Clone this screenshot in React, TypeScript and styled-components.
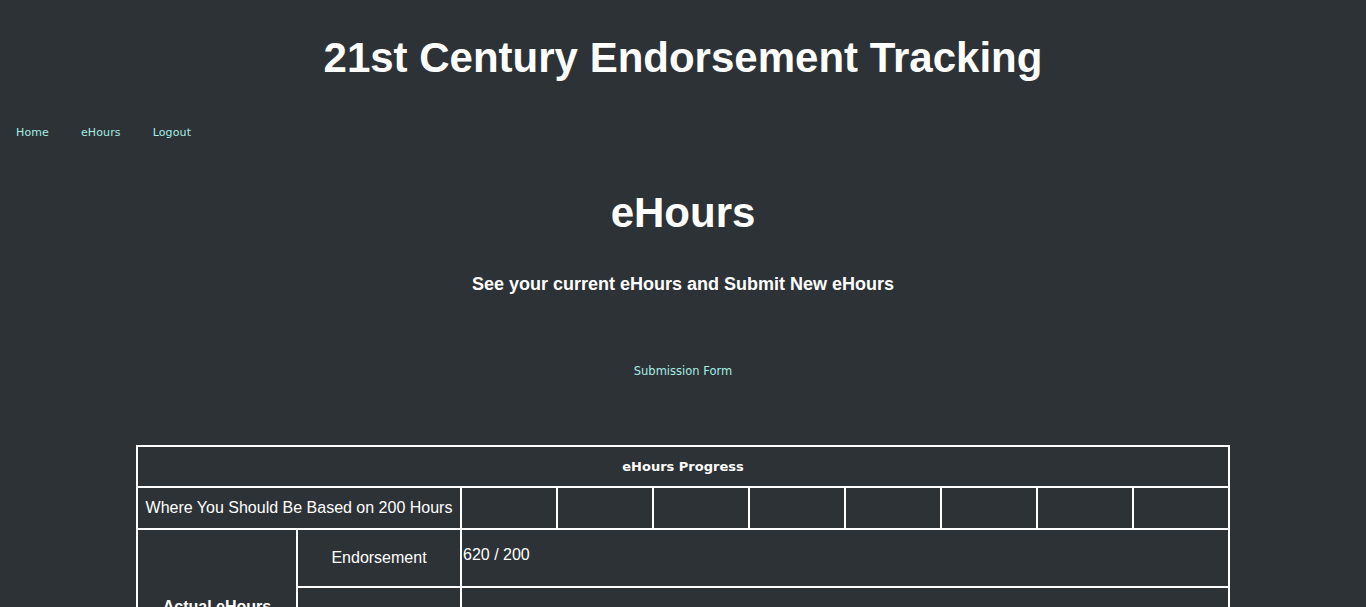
import React from "react";
import styled, { createGlobalStyle } from "styled-components";

const Global = createGlobalStyle`
  html, body { margin: 0; padding: 0; background: #2d3236; }
  body { font-family: "Liberation Sans", Arial, sans-serif; color: #ffffff; }
`;

const Page = styled.div`
  display: flex;
  flex-direction: column;
  padding-top: 35px;
  min-height: 607px;
  background: #2d3236;
`;

const Title = styled.h1`
  margin: 0;
  text-align: center;
  font-size: 42px;
  line-height: 46px;
  font-weight: 700;
`;

const Nav = styled.nav`
  display: flex;
  margin-top: 45px;
`;

const NavLink = styled.a`
  font-family: "DejaVu Sans", sans-serif;
  font-size: 11px;
  line-height: 13px;
  letter-spacing: 0.12px;
  color: #a6ede4;
  text-decoration: none;
  padding: 0 16px;
`;

const Heading = styled.h2`
  margin: 50px 0 0;
  text-align: center;
  font-size: 42px;
  line-height: 48px;
  font-weight: 700;
`;

const Sub = styled.h3`
  margin: 36px 0 0;
  text-align: center;
  font-size: 18px;
  line-height: 22px;
  font-weight: 700;
`;

const FormLinkRow = styled.div`
  display: flex;
  justify-content: center;
  margin-top: 70px;
`;

const FormLink = styled(NavLink)`
  font-size: 11.5px;
  letter-spacing: 0;
  padding: 0;
`;

const Table = styled.table`
  width: 1092px;
  margin: 67px auto 0;
  border-collapse: collapse;
  table-layout: fixed;
  border: 2px solid #fff;
`;

const Cell = styled.td<{ $h?: number; $bold?: boolean; $align?: string }>`
  border: 2px solid #fff;
  height: ${(p) => (p.$h ? `${p.$h}px` : "auto")};
  padding: 0;
  text-align: ${(p) => p.$align || "center"};
  font-size: 16px;
  font-weight: ${(p) => (p.$bold ? 700 : 400)};
  color: #fff;
`;

const HeadCell = styled.th`
  border: 2px solid #fff;
  height: 39px;
  padding: 0;
  font-family: "DejaVu Sans", sans-serif;
  font-size: 13px;
  font-weight: 700;
  color: #fff;
`;

const Progress = styled.div`
  padding: 0 0 6px 1px;
  font-size: 16px;
`;

export default function App() {
  const blanks = Array.from({ length: 8 });
  return (
    <>
      <Global />
      <Page>
        <Title>21st Century Endorsement Tracking</Title>
        <Nav>
          <NavLink href="#">Home</NavLink>
          <NavLink href="#">eHours</NavLink>
          <NavLink href="#">Logout</NavLink>
        </Nav>
        <Heading>eHours</Heading>
        <Sub>See your current eHours and Submit New eHours</Sub>
        <FormLinkRow>
          <FormLink href="#">Submission Form</FormLink>
        </FormLinkRow>
        <Table>
          <colgroup>
            <col style={{ width: 160 }} />
            <col style={{ width: 164 }} />
            {blanks.map((_, i) => (
              <col key={i} style={{ width: 96 }} />
            ))}
          </colgroup>
          <thead>
            <tr>
              <HeadCell colSpan={10}>eHours Progress</HeadCell>
            </tr>
          </thead>
          <tbody>
            <tr>
              <Cell colSpan={2} $h={40}>Where You Should Be Based on 200 Hours</Cell>
              {blanks.map((_, i) => (
                <Cell key={i} />
              ))}
            </tr>
            <tr>
              <Cell rowSpan={2} $bold>Actual eHours</Cell>
              <Cell $h={56}>Endorsement</Cell>
              <Cell colSpan={8} $align="left">
                <Progress>620 / 200</Progress>
              </Cell>
            </tr>
            <tr>
              <Cell $h={96}>Total</Cell>
              <Cell colSpan={8} $align="left">
                <Progress>620 / 200</Progress>
              </Cell>
            </tr>
          </tbody>
        </Table>
      </Page>
    </>
  );
}
